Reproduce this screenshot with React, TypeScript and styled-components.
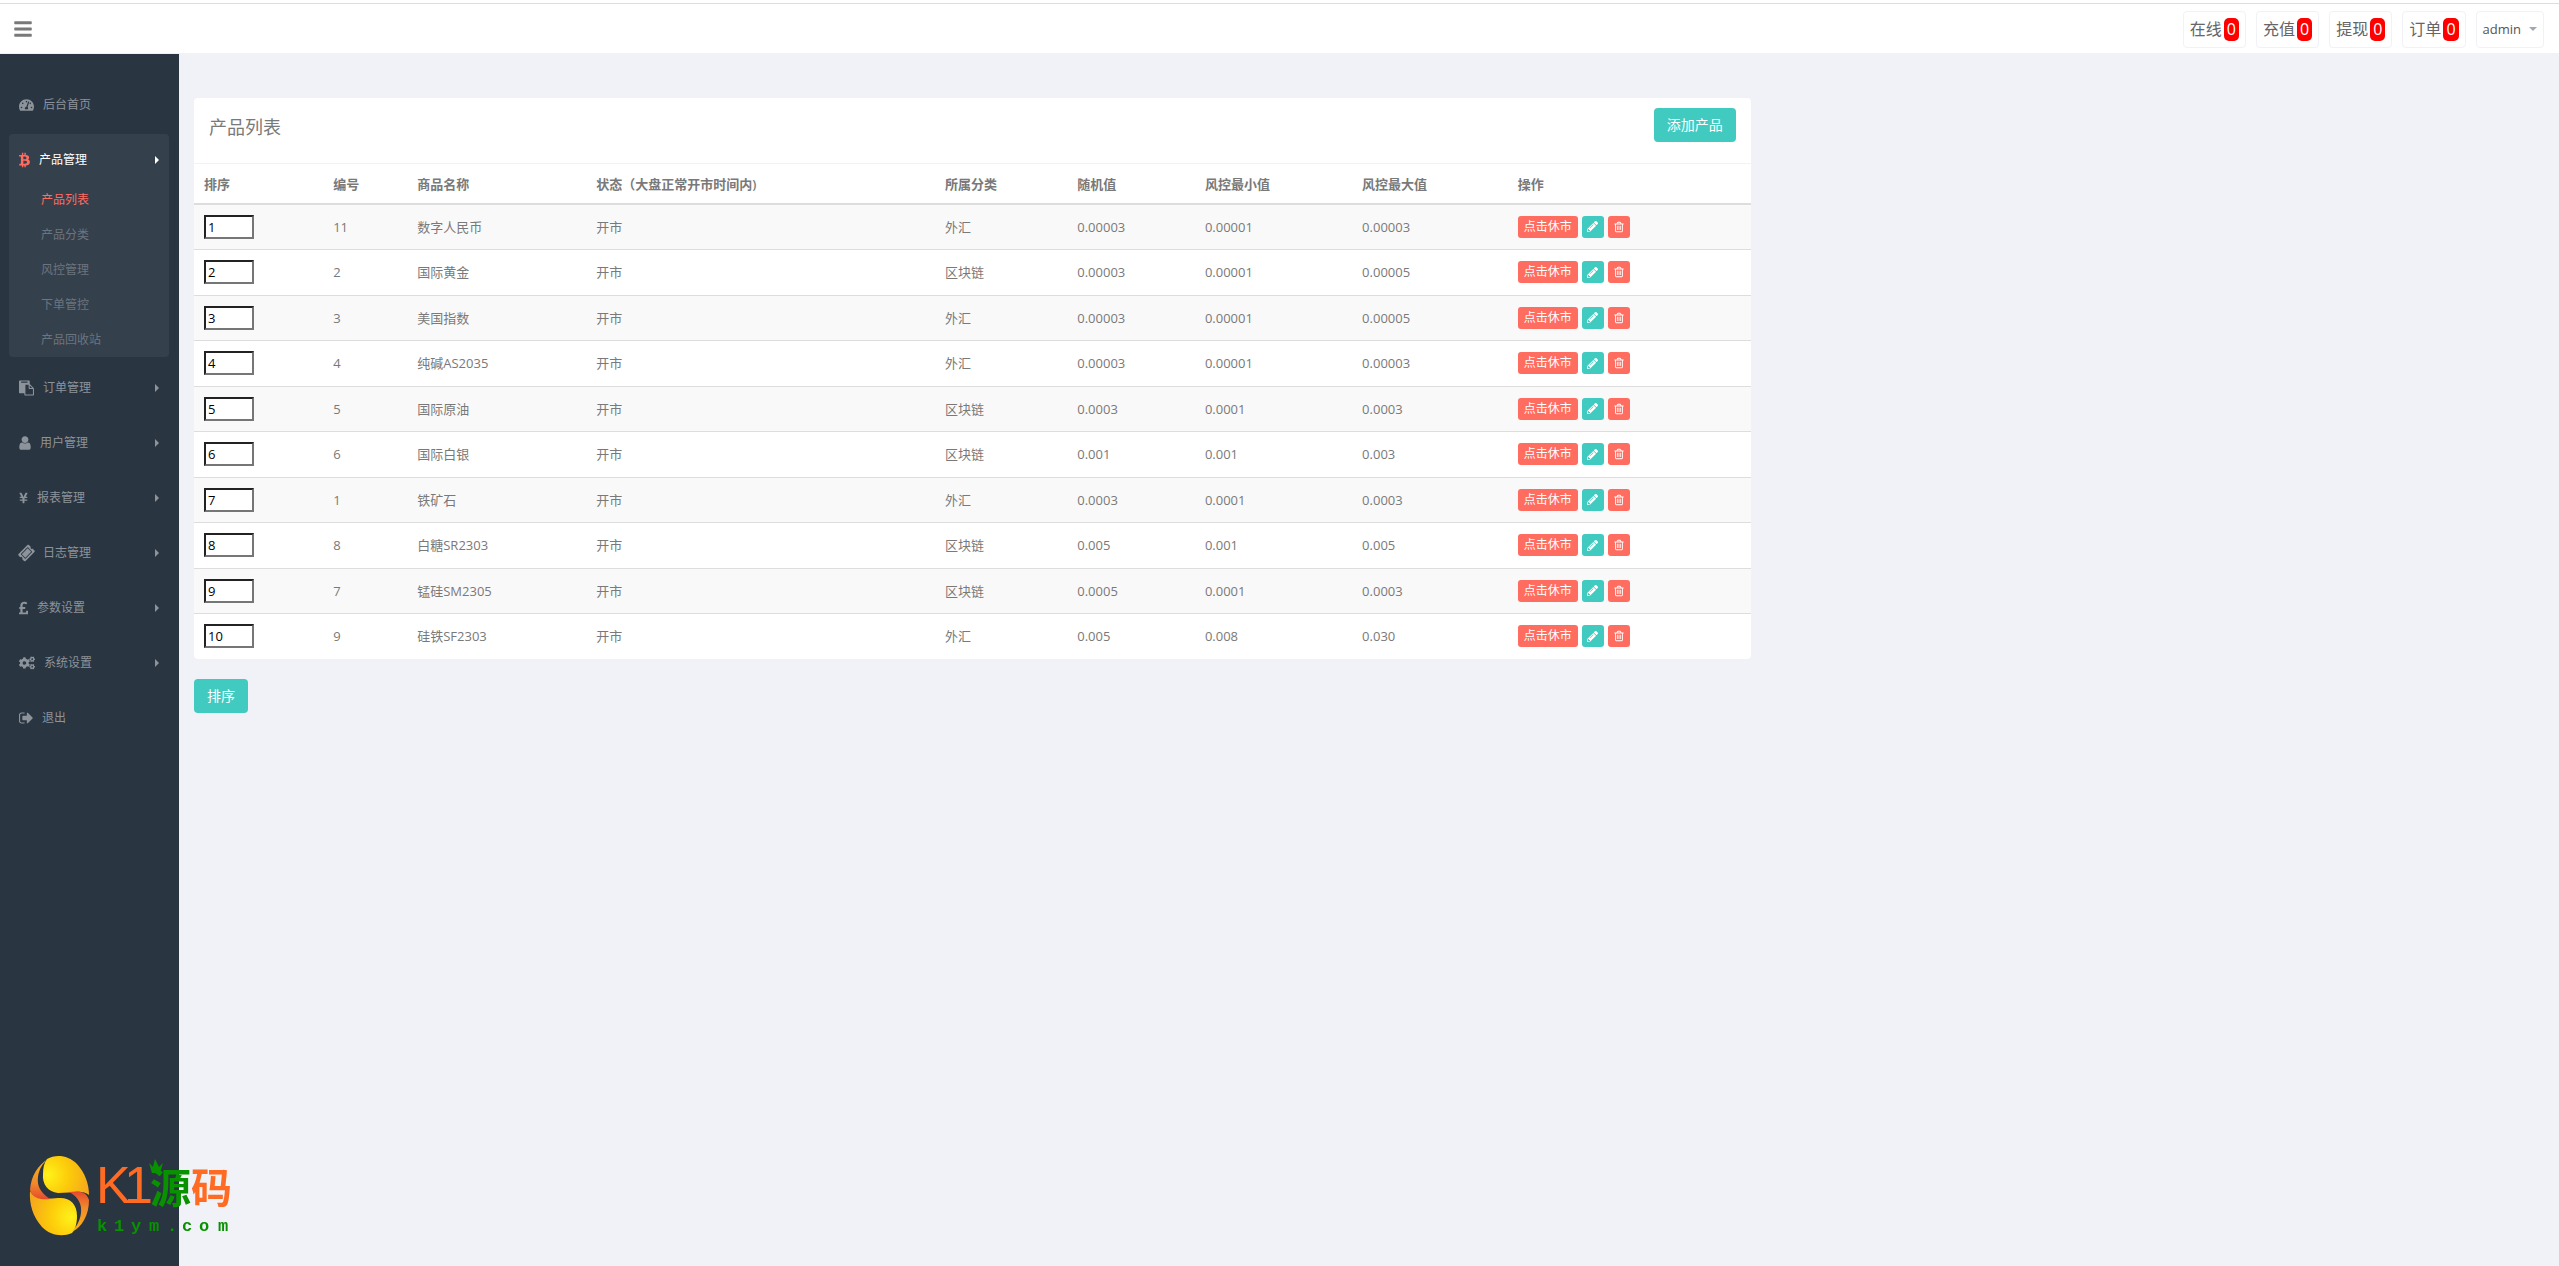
import React from 'react';
import styled, { createGlobalStyle, css } from 'styled-components';
import {
  FaBars,
  FaTachometerAlt,
  FaBtc,
  FaYenSign,
  FaTicketAlt,
  FaPoundSign,
  FaCogs,
  FaPencilAlt,
} from 'react-icons/fa';

const color = {
  text: '#797979',
  page: '#f1f2f7',
  sidebar: '#2a3542',
  sidebarActive: '#35404d',
  danger: '#ff6c60',
  info: '#41cac0',
  line: '#dddddd',
};

const GlobalStyle = createGlobalStyle`
  * { box-sizing: border-box; }
  body {
    margin: 0;
    background: ${color.page};
    color: ${color.text};
    font: 13px/20px "Open Sans", "Noto Sans CJK SC", sans-serif;
  }
  button, input { font: inherit; }
`;

const Page = styled.div`
  display: flex;
  flex-direction: column;
  min-height: 100vh;
`;

const Header = styled.header`
  display: flex;
  align-items: center;
  justify-content: space-between;
  height: 50px;
  margin-top: 3px;
  padding: 1px 15px 0 14px;
  border-top: 1px solid ${color.line};
  background: #fff;
  box-shadow: 0 -3px #fff;
`;

const MenuToggle = styled.button`
  display: flex;
  padding: 0;
  border: 0;
  background: none;
  color: ${color.text};
  cursor: pointer;

  svg {
    width: 18px;
    height: 20px;
  }
`;

const HeaderLinks = styled.nav`
  display: flex;
  gap: 10px;
`;

const HeaderLink = styled.a`
  display: flex;
  align-items: center;
  height: 37px;
  padding: 0 6px;
  border: 1px solid ${color.page};
  border-radius: 4px;
  color: #666;
  font-size: 16px;
  text-decoration: none;
`;

const Count = styled.span`
  margin-left: 2px;
  padding: 0 3px;
  border-radius: 5px;
  background: #f00;
  color: #fff;
  line-height: 23px;
`;

const UserButton = styled.button`
  display: flex;
  align-items: center;
  gap: 8px;
  padding: 0 6px;
  border: 1px solid ${color.page};
  border-radius: 4px;
  background: #fff;
  color: #555;
  cursor: pointer;
`;

const Caret = styled.span`
  border: 4px solid transparent;
  border-top-color: #a1a8b4;
  border-bottom: 0;
`;

const Body = styled.div`
  display: flex;
  flex: 1;
`;

const Sidebar = styled.aside`
  flex: none;
  width: 179px;
  margin-top: 1px;
  padding: 25px 10px 0 9px;
  background: ${color.sidebar};
`;

const Menu = styled.ul`
  display: flex;
  flex-direction: column;
  gap: 5px;
  margin: 0;
  padding: 0;
  list-style: none;
`;

const MenuItem = styled.li<{ $active?: boolean }>`
  border-radius: 4px;
  background: ${(p) => (p.$active ? color.sidebarActive : 'transparent')};
`;

const MenuLink = styled.a<{ $active?: boolean; $iconWidth: number }>`
  display: flex;
  align-items: center;
  gap: 9px;
  height: 50px;
  padding: 1px 10px 0;
  color: ${(p) => (p.$active ? '#fff' : '#8d939a')};
  font-size: 12px;
  text-decoration: none;

  svg {
    width: ${(p) => p.$iconWidth}px;
    height: 16px;
    color: ${(p) => (p.$active ? color.danger : 'inherit')};
  }
`;

const Ticket = styled(FaTicketAlt)`
  transform: rotate(-45deg);
`;

const Arrow = styled.span`
  margin-left: auto;
  border: 4px solid transparent;
  border-left-color: currentColor;
  border-right: 0;
`;

const SubMenu = styled.ul`
  margin: -2px 0 0;
  padding: 0;
  list-style: none;
`;

const SubLink = styled.a<{ $active?: boolean }>`
  display: block;
  padding-left: 32px;
  color: ${(p) => (p.$active ? color.danger : '#6c747e')};
  font-size: 12px;
  line-height: 35px;
  text-decoration: none;
`;

const Main = styled.main`
  flex: 1;
  min-width: 0;
  padding-top: 45px;
`;

const Column = styled.div`
  width: 66.6667%;
  padding: 0 15px;
`;

const Panel = styled.section`
  overflow: hidden;
  margin-bottom: 20px;
  border-radius: 4px;
  background: #fff;
`;

const PanelHeader = styled.header`
  display: flex;
  align-items: flex-start;
  justify-content: space-between;
  min-height: 66px;
  padding: 10px 15px;
  border-bottom: 1px solid #eff2f7;
`;

const Title = styled.h1`
  margin: 0;
  font-size: 18px;
  font-weight: 400;
  line-height: 38px;
`;

const Button = styled.button`
  height: 34px;
  padding: 0 13px;
  border: 0;
  border-radius: 4px;
  background: ${color.info};
  color: #fff;
  font-size: 14px;
  cursor: pointer;
`;

const Table = styled.table`
  width: 100%;
  border-collapse: collapse;
  table-layout: fixed;
`;

const cell = css`
  padding: 0 10px;
  text-align: left;
`;

const Th = styled.th`
  ${cell}
  height: 40px;
  border-bottom: 2px solid ${color.line};
  font-weight: 600;
`;

const Td = styled.td`
  ${cell}
`;

const Row = styled.tr`
  height: 46px;

  &:nth-child(odd) {
    height: 45px;
    background: #f9f9f9;
  }
  & + & {
    border-top: 1px solid ${color.line};
  }
`;

const OrderInput = styled.input`
  display: block;
  width: 50px;
  height: 24px;
  padding: 0 2px;
  border: 2px solid;
  border-color: #222 #767676 #767676 #222;
  background: #fff;
  color: #000;
`;

const Actions = styled.div`
  display: flex;
  gap: 4px;
`;

const SmallButton = styled.button<{ $tone: 'danger' | 'info' }>`
  display: flex;
  align-items: center;
  justify-content: center;
  min-width: 22px;
  height: 22px;
  padding: 0 5px;
  border: 0;
  border-radius: 3px;
  background: ${(p) => color[p.$tone]};
  color: #fff;
  font-size: 12px;
  cursor: pointer;
`;

const LabelButton = styled(SmallButton)`
  padding: 0 6px;
`;

const Brand = styled.div`
  position: fixed;
  left: 24px;
  bottom: 20px;

  svg {
    display: block;
  }
`;

const UserIcon = () => (
  <svg viewBox="256 0 1280 1792" fill="currentColor">
    <path d="M1536 1399q0 109-62.5 187t-150.5 78h-854q-88 0-150.5-78t-62.5-187q0-85 8.5-160.5t31.5-152 58.5-131 94-89 134.5-34.5q131 128 313 128t313-128q76 0 134.5 34.5t94 89 58.5 131 31.5 152 8.5 160.5zm-256-887q0 159-112.5 271.5t-271.5 112.5-271.5-112.5-112.5-271.5 112.5-271.5 271.5-112.5 271.5 112.5 112.5 271.5z" />
  </svg>
);

const PasteIcon = () => (
  <svg viewBox="0 0 1792 1792" fill="currentColor">
    <path d="M768 1664h896v-640h-416q-40 0-68-28t-28-68v-416h-384v1152zm256-1440v-64q0-13-9.5-22.5t-22.5-9.5h-704q-13 0-22.5 9.5t-9.5 22.5v64q0 13 9.5 22.5t22.5 9.5h704q13 0 22.5-9.5t9.5-22.5zm256 672h299l-299-299v299zm512 128v672q0 40-28 68t-68 28h-960q-40 0-68-28t-28-68v-160h-544q-40 0-68-28t-28-68v-1344q0-40 28-68t68-28h1088q40 0 68 28t28 68v328q21 13 36 28l408 408q28 28 48 76t20 88z" />
  </svg>
);

const SignOutIcon = () => (
  <svg viewBox="0 0 1600 1792" fill="currentColor">
    <path d="M640 1440q0 4 1 20t.5 26.5-3 23.5-10 19.5-20.5 6.5h-320q-119 0-203.5-84.5t-84.5-203.5v-704q0-119 84.5-203.5t203.5-84.5h320q13 0 22.5 9.5t9.5 22.5q0 4 1 20t.5 26.5-3 23.5-10 19.5-20.5 6.5h-320q-66 0-113 47t-47 113v704q0 66 47 113t113 47h312l11.5 1 11.5 3 8 5.5 7 9 2 13.5zm928-544q0 26-19 45l-544 544q-19 19-45 19t-45-19-19-45v-288h-448q-26 0-45-19t-19-45v-384q0-26 19-45t45-19h448v-288q0-26 19-45t45-19 45 19l544 544q19 19 19 45z" />
  </svg>
);

const TrashIcon = () => (
  <svg width="12" height="12" viewBox="0 0 1792 1792" fill="currentColor">
    <path d="M704 736v576q0 14-9 23t-23 9h-64q-14 0-23-9t-9-23v-576q0-14 9-23t23-9h64q14 0 23 9t9 23zm256 0v576q0 14-9 23t-23 9h-64q-14 0-23-9t-9-23v-576q0-14 9-23t23-9h64q14 0 23 9t9 23zm256 0v576q0 14-9 23t-23 9h-64q-14 0-23-9t-9-23v-576q0-14 9-23t23-9h64q14 0 23 9t9 23zm128 724v-948h-896v948q0 22 7 40.5t14.5 27 10.5 8.5h832q3 0 10.5-8.5t14.5-27 7-40.5zm-672-1076h448l-48-117q-7-9-17-11h-317q-10 2-17 11zm928 32v64q0 14-9 23t-23 9h-96v948q0 83-47 143.5t-113 60.5h-832q-66 0-113-58.5t-47-141.5v-952h-96q-14 0-23-9t-9-23v-64q0-14 9-23t23-9h309l70-167q15-37 54-63t79-26h320q40 0 79 26t54 63l70 167h309q14 0 23 9t9 23z" />
  </svg>
);

const Logo = () => (
  <svg width="214" height="100" viewBox="24 1146 214 100" role="img" aria-label="K1源码 k1ym.com">
    <defs>
      <radialGradient id="upper" gradientUnits="userSpaceOnUse" cx="48" cy="1175" r="42">
        <stop offset="0" stopColor="#fff21a" />
        <stop offset="0.5" stopColor="#fccb0a" />
        <stop offset="1" stopColor="#f5a81c" />
      </radialGradient>
      <radialGradient id="lower" gradientUnits="userSpaceOnUse" cx="71" cy="1217" r="42">
        <stop offset="0" stopColor="#fff21a" />
        <stop offset="0.5" stopColor="#fccb0a" />
        <stop offset="1" stopColor="#f5a81c" />
      </radialGradient>
      <linearGradient id="leftBand" x1="0" y1="0" x2="0" y2="1">
        <stop offset="0" stopColor="#f9b515" />
        <stop offset="0.6" stopColor="#f18a2a" />
        <stop offset="1" stopColor="#e6492d" />
      </linearGradient>
      <linearGradient id="rightBand" x1="0" y1="0" x2="0" y2="1">
        <stop offset="0" stopColor="#e6492d" />
        <stop offset="0.4" stopColor="#f18a2a" />
        <stop offset="1" stopColor="#f9b515" />
      </linearGradient>
    </defs>
    <path d="M47 1159C56 1154 68 1155 77 1164C85 1173 89 1184 89 1195C82 1189 72 1193 58 1193C48 1192 42 1184 43 1174C43 1168 44 1163 47 1159Z" fill="url(#upper)" />
    <path d="M30 1191C35 1200 45 1199 58 1198C70 1197 77 1204 77 1216C77 1224 75 1230 72 1233C63 1237 51 1236 42 1227C33 1217 29 1204 30 1191Z" fill="url(#lower)" />
    <path d="M48 1159C38 1165 31 1176 30 1190C33 1199 41 1200 50 1199C39 1192 37 1184 38 1177C39 1169 43 1163 48 1159Z" fill="url(#leftBand)" />
    <path d="M72 1232C82 1227 89 1215 89 1200C86 1191 79 1191 69 1192C79 1197 82 1205 81 1213C80 1221 76 1227 72 1232Z" fill="url(#rightBand)" />
    <text x="96 124" y="1203" fontFamily="'Liberation Sans', sans-serif" fontSize="52" fill="#ff6b22">
      K1
    </text>
    <g fontFamily="'Noto Sans CJK SC', sans-serif" fontSize="41" fontWeight="700">
      <text x="150" y="1203" fill="#089200">源</text>
      <text x="191" y="1203" fill="#ff6b22">码</text>
    </g>
    <text
      x="97 114 131 149 167 182 199 218"
      y="1231"
      fontFamily="'Liberation Mono', monospace"
      fontSize="17"
      fontWeight="700"
      fill="#089200"
    >
      k1ym.com
    </text>
    <path d="M149 1163L153 1167L155 1159L159 1167L163 1163L160 1173H152Z" fill="#089200" />
  </svg>
);

const stats = ['在线', '充值', '提现', '订单'];

const subMenu = ['产品列表', '产品分类', '风控管理', '下单管控', '产品回收站'];

const menu = [
  { label: '后台首页', icon: <FaTachometerAlt />, iconWidth: 15, leaf: true },
  { label: '产品管理', icon: <FaBtc />, iconWidth: 11, active: true },
  { label: '订单管理', icon: <PasteIcon />, iconWidth: 15 },
  { label: '用户管理', icon: <UserIcon />, iconWidth: 12 },
  { label: '报表管理', icon: <FaYenSign />, iconWidth: 9 },
  { label: '日志管理', icon: <Ticket />, iconWidth: 15 },
  { label: '参数设置', icon: <FaPoundSign />, iconWidth: 9 },
  { label: '系统设置', icon: <FaCogs />, iconWidth: 16 },
  { label: '退出', icon: <SignOutIcon />, iconWidth: 14, leaf: true },
];

const columns = [
  { label: '排序', width: '8.3%' },
  { label: '编号', width: '5.4%' },
  { label: '商品名称', width: '11.5%' },
  { label: '状态（大盘正常开市时间内)', width: '22.4%' },
  { label: '所属分类', width: '8.5%' },
  { label: '随机值', width: '8.2%' },
  { label: '风控最小值', width: '10.1%' },
  { label: '风控最大值', width: '10%' },
  { label: '操作', width: '15.6%' },
];

const products = [
  ['11', '数字人民币', '开市', '外汇', '0.00003', '0.00001', '0.00003'],
  ['2', '国际黄金', '开市', '区块链', '0.00003', '0.00001', '0.00005'],
  ['3', '美国指数', '开市', '外汇', '0.00003', '0.00001', '0.00005'],
  ['4', '纯碱AS2035', '开市', '外汇', '0.00003', '0.00001', '0.00003'],
  ['5', '国际原油', '开市', '区块链', '0.0003', '0.0001', '0.0003'],
  ['6', '国际白银', '开市', '区块链', '0.001', '0.001', '0.003'],
  ['1', '铁矿石', '开市', '外汇', '0.0003', '0.0001', '0.0003'],
  ['8', '白糖SR2303', '开市', '区块链', '0.005', '0.001', '0.005'],
  ['7', '锰硅SM2305', '开市', '区块链', '0.0005', '0.0001', '0.0003'],
  ['9', '硅铁SF2303', '开市', '外汇', '0.005', '0.008', '0.030'],
];

export default function App() {
  return (
    <Page>
      <GlobalStyle />
      <Header>
        <MenuToggle aria-label="菜单">
          <FaBars />
        </MenuToggle>
        <HeaderLinks>
          {stats.map((label) => (
            <HeaderLink href="#" key={label}>
              {label}
              <Count>0</Count>
            </HeaderLink>
          ))}
          <UserButton>
            admin
            <Caret />
          </UserButton>
        </HeaderLinks>
      </Header>
      <Body>
        <Sidebar>
          <Menu>
            {menu.map((item) => (
              <MenuItem key={item.label} $active={item.active}>
                <MenuLink href="#" $active={item.active} $iconWidth={item.iconWidth}>
                  {item.icon}
                  {item.label}
                  {!item.leaf && <Arrow />}
                </MenuLink>
                {item.active && (
                  <SubMenu>
                    {subMenu.map((label, i) => (
                      <li key={label}>
                        <SubLink href="#" $active={i === 0}>
                          {label}
                        </SubLink>
                      </li>
                    ))}
                  </SubMenu>
                )}
              </MenuItem>
            ))}
          </Menu>
        </Sidebar>
        <Main>
          <Column>
            <Panel>
              <PanelHeader>
                <Title>产品列表</Title>
                <Button>添加产品</Button>
              </PanelHeader>
              <Table>
                <colgroup>
                  {columns.map((c) => (
                    <col key={c.label} style={{ width: c.width }} />
                  ))}
                </colgroup>
                <thead>
                  <tr>
                    {columns.map((c) => (
                      <Th key={c.label}>{c.label}</Th>
                    ))}
                  </tr>
                </thead>
                <tbody>
                  {products.map((values, i) => (
                    <Row key={values[0]}>
                      <Td>
                        <OrderInput aria-label={`排序 ${values[1]}`} defaultValue={i + 1} />
                      </Td>
                      {values.map((value, n) => (
                        <Td key={n}>{value}</Td>
                      ))}
                      <Td>
                        <Actions>
                          <LabelButton $tone="danger">点击休市</LabelButton>
                          <SmallButton $tone="info" aria-label="编辑">
                            <FaPencilAlt size={11} />
                          </SmallButton>
                          <SmallButton $tone="danger" aria-label="删除">
                            <TrashIcon />
                          </SmallButton>
                        </Actions>
                      </Td>
                    </Row>
                  ))}
                </tbody>
              </Table>
            </Panel>
            <Button>排序</Button>
          </Column>
        </Main>
      </Body>
      <Brand>
        <Logo />
      </Brand>
    </Page>
  );
}
